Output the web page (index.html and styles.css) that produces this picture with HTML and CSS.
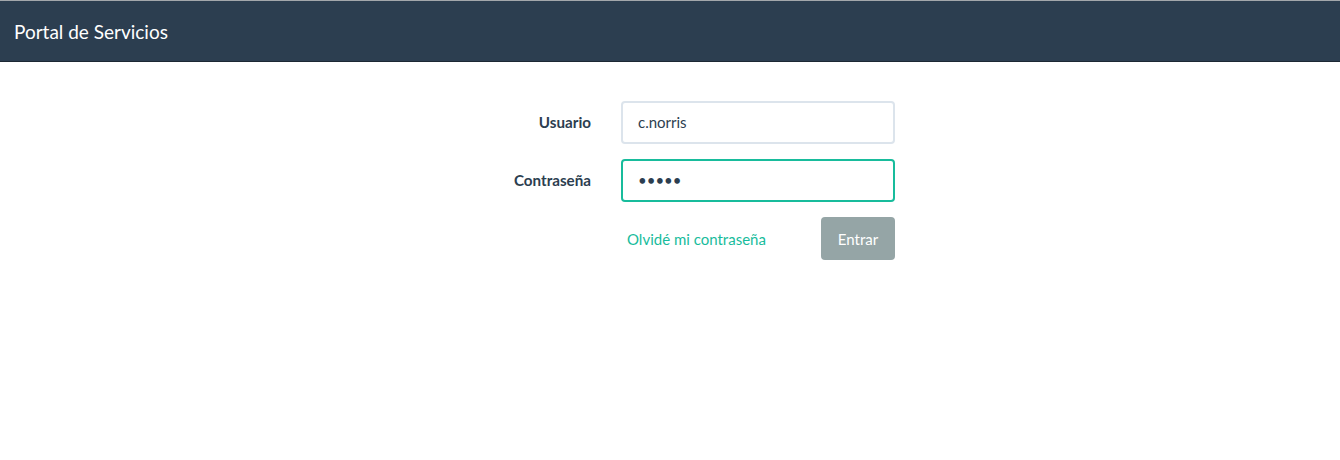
FILE: index.html
```html
<!DOCTYPE html>
<html lang="es">
<head>
<meta charset="utf-8">
<title>Portal de Servicios</title>
<link rel="stylesheet" href="styles.css">
</head>
<body>
<header class="navbar">
  <span class="brand">Portal de Servicios</span>
</header>
<main class="login">
  <form class="login-form">
    <label class="field-label" for="user">Usuario</label>
    <input class="field-input" id="user" type="text" value="c.norris">
    <label class="field-label" for="pass">Contraseña</label>
    <input class="field-input is-focused" id="pass" type="password" value="12345">
    <span></span>
    <div class="actions">
      <a class="forgot" href="#">Olvidé mi contraseña</a>
      <button class="btn-submit" type="button">Entrar</button>
    </div>
  </form>
</main>
</body>
</html>
```

FILE: styles.css
```css
* { box-sizing: border-box; }
html, body {
  margin: 0;
  padding: 0;
  background: #ffffff;
  font-family: Lato, "Open Sans", "Liberation Sans", sans-serif;
  color: #2c3e50;
}
.navbar {
  height: 62px;
  background: #2c3e50;
  border-top: 1px solid #a3a7ab;
  border-bottom: 1px solid #1c2833;
  display: flex;
  align-items: center;
  padding-left: 14px;
}
.brand {
  color: #ffffff;
  font-size: 19px;
  line-height: 21px;
}
.login {
  padding-top: 39px;
}
.login-form {
  margin-left: 450px;
  display: grid;
  grid-template-columns: 141px 274px;
  grid-auto-rows: 43px;
  column-gap: 30px;
  row-gap: 15px;
  align-items: center;
}
.field-label {
  text-align: right;
  font-weight: 700;
  font-size: 15.2px;
  color: #2c3e50;
  margin-top: -1px;
}
.field-input {
  height: 43px;
  width: 274px;
  border: 2px solid #dce4ec;
  border-radius: 4px;
  padding: 0 15px 1px;
  font-family: Lato, "Open Sans", "Liberation Sans", sans-serif;
  font-size: 15px;
  color: #2c3e50;
  background: #ffffff;
  outline: none;
}
.field-input.is-focused {
  border-color: #18bc9c;
}
.actions {
  display: flex;
  align-items: center;
  justify-content: space-between;
}
.forgot {
  padding-left: 6px;
  color: #18bc9c;
  font-size: 15px;
  text-decoration: none;
}
.btn-submit {
  width: 74px;
  height: 43px;
  border: none;
  border-radius: 4px;
  background: #95a5a6;
  color: #ffffff;
  font-family: Lato, "Open Sans", "Liberation Sans", sans-serif;
  font-size: 15px;
  padding: 0;
}
```
